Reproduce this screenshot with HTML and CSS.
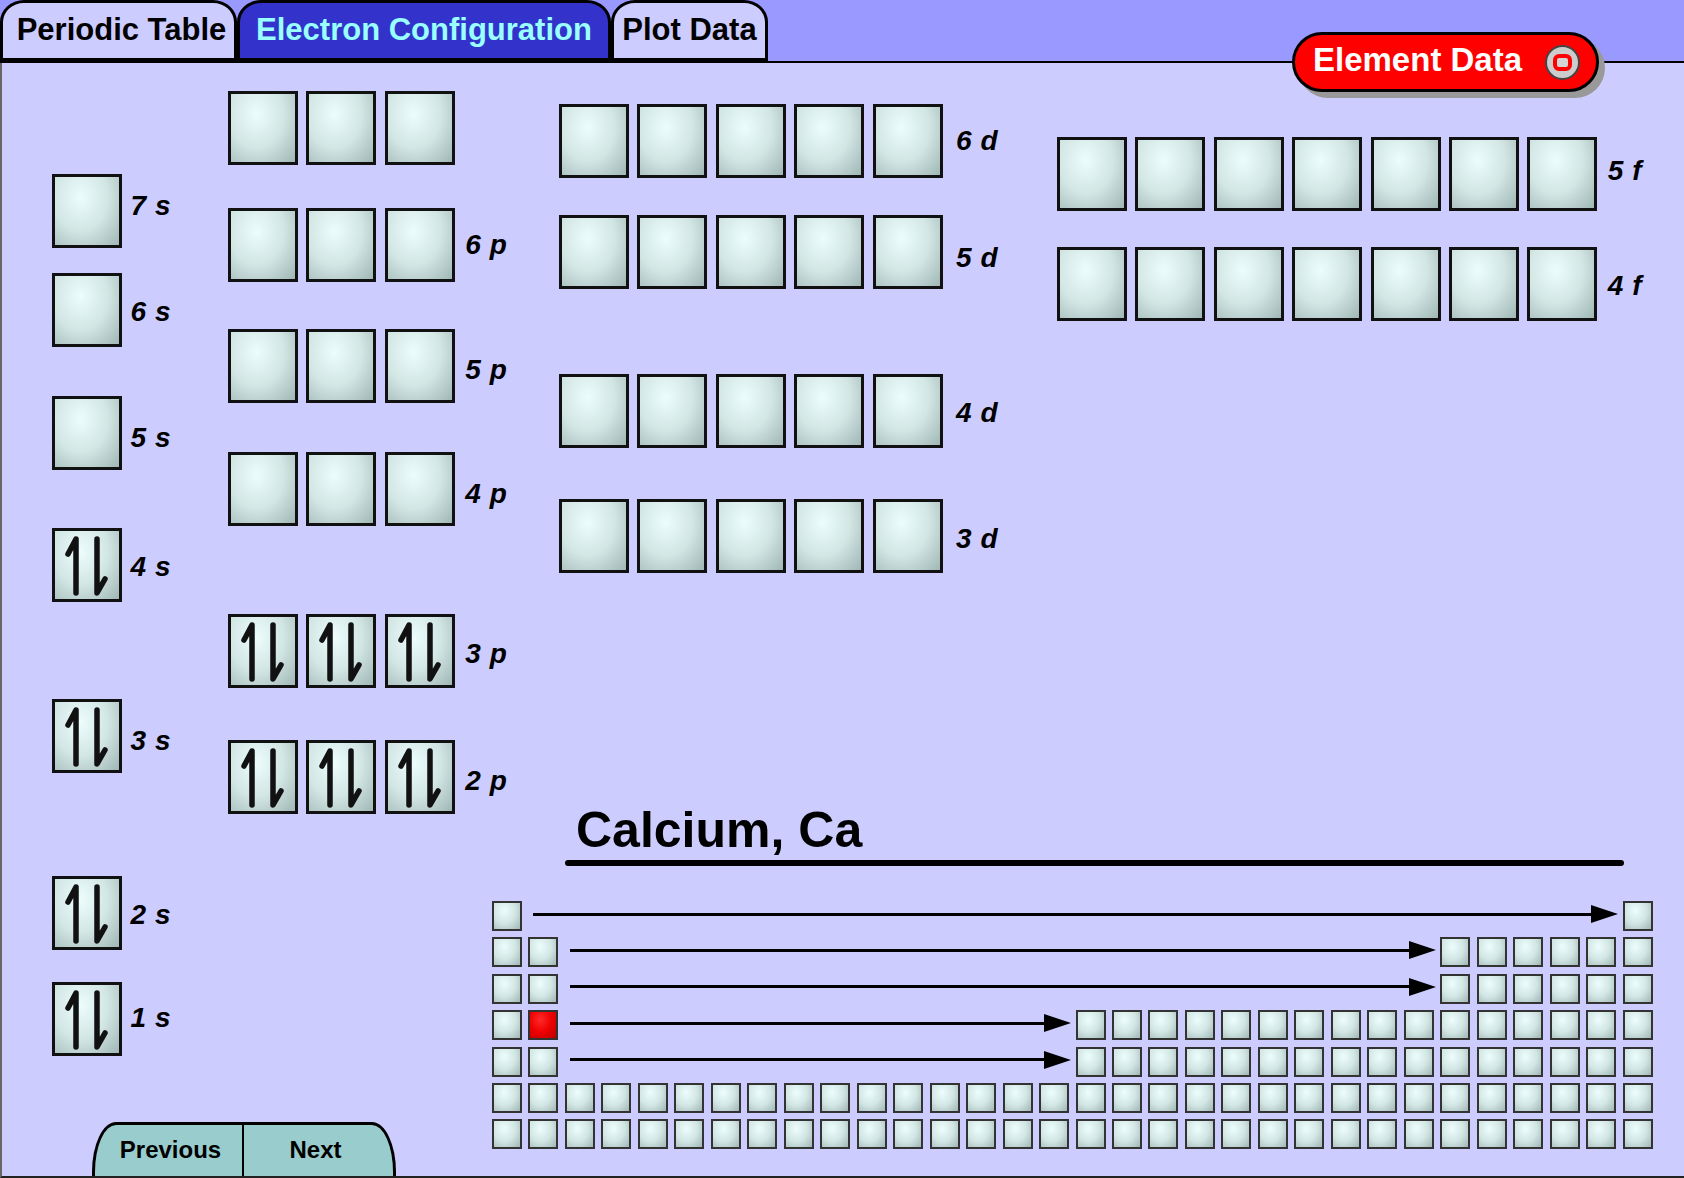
FILE: index.html
```html
<!DOCTYPE html>
<html lang="en">
<head>
    <meta charset="UTF-8">
    <meta name="viewport" content="width=device-width, initial-scale=1.0">
    <title>Electron Configuration</title>
    <link rel="stylesheet" href="styles.css">
</head>
<body>
    <div class="app">
        <div class="tabbar">
            <div class="tab tab-periodic">Periodic Table</div>
            <div class="tab tab-config">Electron Configuration</div>
            <div class="tab tab-plot">Plot Data</div>
        </div>

        <button class="element-btn"><span class="btn-label">Element Data</span><span class="stop-icon"><span></span></span></button>

        <div class="panel">
            <div class="s-col">
                <div id="s-rows"></div>
                <div class="pager">
                    <button class="prev">Previous</button>
                    <button class="next">Next</button>
                </div>
            </div>

            <div class="main">
                <div class="p-col" id="p-col"></div>
                <div class="right-col">
                    <div class="df">
                        <div class="d-col" id="d-col"></div>
                        <div class="f-col" id="f-col"></div>
                    </div>
                    <h1 class="element-name">Calcium, Ca</h1>
                    <div class="rule"></div>
                </div>
                <div class="mini" id="mini"></div>
            </div>
        </div>
    </div>

    <script>
        // each subshell row: label, top edge (page y), filled pair or not, label nudge
        const PANEL_TOP = 63;
        const BOX_H = 74;

        const sRows = [["7 s", 174, 0, -5], ["6 s", 273, 0, 2], ["5 s", 396, 0, 5], ["4 s", 528, 1, 2], ["3 s", 699, 1, 5], ["2 s", 876, 1, 2], ["1 s", 982, 1, -1]];
        const pRows = [["", 91, 0, 0], ["6 p", 208, 0, 0], ["5 p", 329, 0, 4], ["4 p", 452, 0, 5], ["3 p", 614, 1, 3], ["2 p", 740, 1, 4]];
        const dRows = [["6 d", 104, 0, 0], ["5 d", 215, 0, 6], ["4 d", 374, 0, 2], ["3 d", 499, 0, 3]];
        const fRows = [["5 f", 137, 0, -3], ["4 f", 247, 0, 2]];

        const pair = '<svg class="spins" viewBox="0 0 64 68" width="64" height="68">' +
            '<path d="M21 62V8L13 23"/><path d="M42 8V62L50 48"/></svg>';

        function buildColumn(id, rows, count) {
            let col = document.getElementById(id);
            let y = PANEL_TOP;
            rows.forEach(([label, top, filled, nudge]) => {
                let row = document.createElement("div");
                row.className = "orbital";
                row.style.marginTop = (top - y) + "px";
                y = top + BOX_H;
                for (let i = 0; i < count; i++) {
                    let box = document.createElement("div");
                    box.className = "orb";
                    if (filled) box.innerHTML = pair;
                    row.appendChild(box);
                }
                let name = document.createElement("span");
                name.className = "label";
                name.style.marginTop = (21 + nudge) + "px";
                name.textContent = label;
                row.appendChild(name);
                col.appendChild(row);
            });
        }

        buildColumn("s-rows", sRows, 1);
        buildColumn("p-col", pRows, 3);
        buildColumn("d-col", dRows, 5);
        buildColumn("f-col", fRows, 7);

        // small periodic table: columns used per period, and the arrow gap
        const all = [...Array(32).keys()];
        const range = (a, b) => all.filter(c => c >= a && c <= b);
        const periods = [
            { cells: [0, 31], arrow: [1, 30] },
            { cells: [0, 1, ...range(26, 31)], arrow: [2, 25] },
            { cells: [0, 1, ...range(26, 31)], arrow: [2, 25] },
            { cells: [0, 1, ...range(16, 31)], arrow: [2, 15] },
            { cells: [0, 1, ...range(16, 31)], arrow: [2, 15] },
            { cells: all },
            { cells: all }
        ];

        let mini = document.getElementById("mini");
        periods.forEach((p, r) => {
            p.cells.forEach(c => {
                let cell = document.createElement("div");
                cell.className = (r === 3 && c === 1) ? "cell on" : "cell";
                cell.style.gridArea = (r + 1) + " / " + (c + 1);
                mini.appendChild(cell);
            });
            if (p.arrow) {
                let arrow = document.createElement("div");
                arrow.className = "arrow";
                arrow.style.gridArea = (r + 1) + " / " + (p.arrow[0] + 1) + " / " + (r + 2) + " / " + (p.arrow[1] + 2);
                arrow.innerHTML = '<span class="shaft"></span><span class="head"></span>';
                mini.appendChild(arrow);
            }
        });
    </script>
</body>
</html>
```

FILE: styles.css
```css
body { margin: 0; background: #ccccff; font-family: "Liberation Sans", Arial, sans-serif; }
.app { position: relative; width: 1684px; height: 1178px; overflow: hidden; }

/* tabs */
.tabbar { height: 63px; display: flex; background: #9999ff; border-bottom: 2px solid #000; box-sizing: border-box; }
.tab { height: 61px; box-sizing: border-box; border: 3px solid #000; border-radius: 24px 24px 0 0 / 22px 22px 0 0; background: #ccccff; color: #000; font-size: 31px; font-weight: bold; display: flex; align-items: center; justify-content: center; padding-bottom: 2px; }
.tab-periodic { width: 237px; padding-left: 6px; }
.tab-config { width: 374px; background: #3333cc; color: #99ffff; }
.tab-plot { width: 157px; }

.element-btn { position: absolute; left: 1292px; top: 32px; width: 307px; height: 60px; box-sizing: border-box; border: 3px solid #000; border-radius: 30px; background: #ff0000; color: #fff; font-family: inherit; font-size: 33px; font-weight: bold; box-shadow: 6px 6px 0 #999; display: flex; align-items: center; padding: 0 0 0 18px; gap: 23px; cursor: pointer; }
.btn-label { margin-top: -4px; }
.stop-icon { width: 35px; height: 35px; box-sizing: border-box; border-radius: 50%; background: #cccccc; border: 2px solid #444; display: flex; align-items: center; justify-content: center; }
.stop-icon span { width: 19px; height: 17px; box-sizing: border-box; border: 4px solid #ff0000; border-radius: 6px; background: #d4d4d4; }

/* main panel */
.panel { height: 1115px; box-sizing: border-box; display: flex; border-left: 2px solid #666; border-bottom: 2px solid #222; }
.s-col { width: 176px; flex-shrink: 0; margin-left: 50px; display: flex; flex-direction: column; }
.main { flex: 1; align-self: flex-start; display: grid; grid-template-columns: 264px 67px 1fr; align-items: start; }
.p-col { grid-column: 1 / 3; grid-row: 1; }
.right-col { grid-column: 3; grid-row: 1; }
.df { display: flex; align-items: flex-start; }
.d-col { width: 498px; flex-shrink: 0; }

.orbital { display: flex; align-items: flex-start; height: 74px; gap: 8.4px; }
.orb { width: 70px; height: 74px; flex-shrink: 0; box-sizing: border-box; border: 3px solid #111; background: radial-gradient(farthest-corner at 40% 30%, #ecfdfc 0%, #d2e6e4 50%, #a0b7b5 100%); }
.spins { display: block; fill: none; stroke: #111; stroke-width: 5.5; stroke-linecap: round; stroke-linejoin: round; }
.label { font-size: 28px; line-height: 32px; letter-spacing: 0.6px; font-weight: bold; font-style: italic; white-space: pre; margin-left: 2px; }
.s-col .label { margin-left: 0; }
.d-col .label { margin-left: 5px; }

.element-name { margin: 233px 0 0 17px; font-size: 50px; line-height: 48px; font-weight: bold; }
.rule { margin: 6px 0 0 6px; width: 1059px; height: 6px; background: #000; border-radius: 3px; }

/* small periodic table */
.mini { grid-column: 2 / 4; grid-row: 2; margin-top: 35px; display: grid; grid-template-columns: repeat(32, 30px); grid-auto-rows: 30px; column-gap: 6.47px; row-gap: 6.4px; }
.cell { box-sizing: border-box; border: 2px solid #333; background: radial-gradient(farthest-corner at 40% 30%, #ecfdfc 0%, #d2e6e4 50%, #a0b7b5 100%); }
.cell.on { background: radial-gradient(farthest-corner at 40% 30%, #ff2a2a 0%, #ee0000 50%, #b80000 100%); }
.arrow { display: flex; align-items: center; padding: 0 0 4px 5px; margin-right: -2px; }
.shaft { flex: 1; height: 3px; background: #000; }
.head { width: 0; height: 0; border-left: 27px solid #000; border-top: 9.5px solid transparent; border-bottom: 9.5px solid transparent; }

/* previous / next */
.pager { margin-top: auto; margin-left: 40px; width: 304px; height: 54px; flex-shrink: 0; display: flex; box-sizing: border-box; border: 3px solid #000; border-bottom: 0; border-radius: 24px 24px 0 0 / 50px 50px 0 0; background: #99cccc; overflow: hidden; }
.pager button { flex: 1; border: none; background: transparent; font-family: inherit; font-size: 24px; font-weight: bold; color: #000; padding: 0 0 2px; cursor: pointer; }
.pager .prev { border-right: 2px solid #000; padding-left: 4px; }
.pager .next { padding-right: 6px; }
```
